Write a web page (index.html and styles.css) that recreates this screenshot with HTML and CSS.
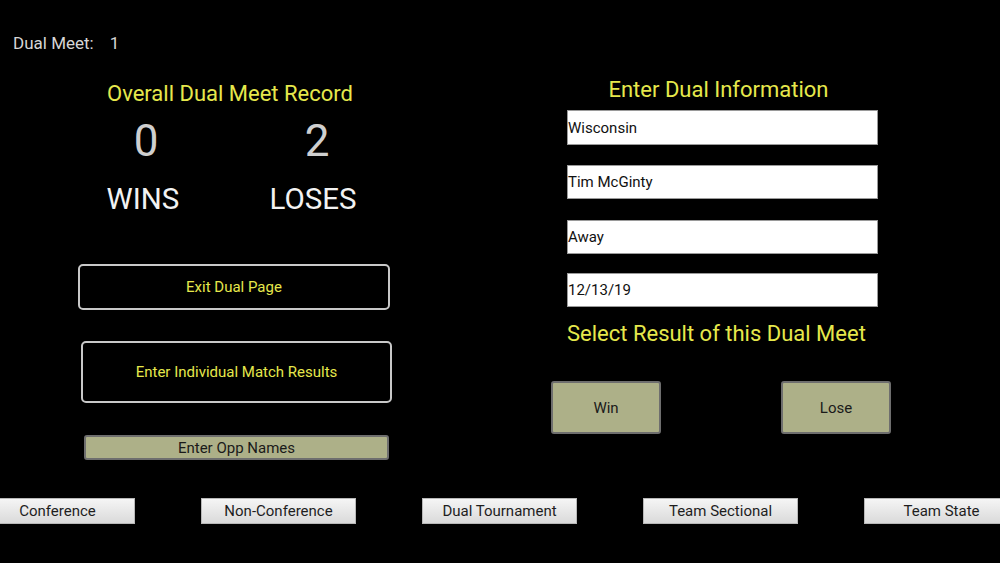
FILE: index.html
```html
<!DOCTYPE html>
<html>
<head>
<meta charset="utf-8">
<link rel="stylesheet" href="styles.css">
</head>
<body>
<div class="screen">
  <div class="top"><span>Dual Meet:</span><span class="meet-no">1</span></div>
  <div class="main">
    <div class="left">
      <div class="title">Overall Dual Meet Record</div>
      <div class="scores">
        <div class="stat"><div class="num">0</div><div class="label">WINS</div></div>
        <div class="stat"><div class="num">2</div><div class="label">LOSES</div></div>
      </div>
      <div class="btn-outline exit">Exit Dual Page</div>
      <div class="btn-outline matches">Enter Individual Match Results</div>
      <div class="btn-olive opp">Enter Opp Names</div>
    </div>
    <div class="right">
      <div class="heading">Enter Dual Information</div>
      <div class="field f1">Wisconsin</div>
      <div class="field f2">Tim McGinty</div>
      <div class="field f3">Away</div>
      <div class="field f4">12/13/19</div>
      <div class="select">Select Result of this Dual Meet</div>
      <div class="result-row">
        <div class="btn-olive result">Win</div>
        <div class="btn-olive result">Lose</div>
      </div>
    </div>
  </div>
  <div class="tabs">
    <div class="tab">Conference</div>
    <div class="tab">Non-Conference</div>
    <div class="tab">Dual Tournament</div>
    <div class="tab">Team Sectional</div>
    <div class="tab">Team State</div>
  </div>
</div>
</body>
</html>
```

FILE: styles.css
```css
html, body {
  margin: 0;
  padding: 0;
  background: #000;
}
.screen {
  width: 1000px;
  height: 563px;
  overflow: hidden;
  background: #000;
  font-family: Roboto, "Liberation Sans", sans-serif;
}
.top {
  padding: 33px 0 0 13px;
  height: 20px;
  font-size: 17px;
  line-height: 20px;
  color: #d6d6d6;
}
.meet-no {
  margin-left: 16px;
}
.main {
  display: grid;
  grid-template-columns: 470px 1fr;
  height: 445px;
}
.title, .heading, .select {
  font-size: 22px;
  line-height: 26px;
  color: #e6e84c;
}
.title {
  margin-top: 28px;
  width: 460px;
  text-align: center;
}
.scores {
  display: flex;
  gap: 48px;
  margin-top: 12px;
  margin-left: 85px;
}
.stat {
  width: 120px;
  text-align: center;
}
.num {
  font-size: 44px;
  line-height: 44px;
  color: #cfcfcf;
}
.stat:first-child .num {
  padding-left: 2px;
}
.stat:last-child .num {
  padding-left: 8px;
}
.label {
  margin-top: 22px;
  font-size: 29.5px;
  line-height: 28px;
  color: #f2f2f2;
}
.stat:first-child .label {
  margin-right: 4px;
}
.btn-outline {
  box-sizing: border-box;
  border: 2px solid #c8c8c8;
  border-radius: 5px;
  display: flex;
  align-items: center;
  justify-content: center;
  color: #e6e84c;
  font-size: 15px;
}
.exit {
  margin-top: 51px;
  margin-left: 78px;
  width: 312px;
  height: 46px;
}
.matches {
  margin-top: 31px;
  margin-left: 81px;
  width: 311px;
  height: 62px;
}
.btn-olive {
  box-sizing: border-box;
  background: #adb088;
  border: 2px solid #6e6e6e;
  border-radius: 3px;
  display: flex;
  align-items: center;
  justify-content: center;
  color: #1a1a1a;
  font-size: 15px;
}
.opp {
  margin-top: 32px;
  margin-left: 84px;
  width: 305px;
  height: 25px;
}
.right {
  padding-left: 97px;
}
.heading {
  margin-top: 24px;
  width: 303px;
  text-align: center;
}
.field {
  box-sizing: border-box;
  width: 311px;
  height: 34px;
  background: #fff;
  border: 1px solid #9a9a9a;
  padding-left: 0;
  display: flex;
  align-items: center;
  font-size: 15px;
  color: #111;
}
.f1 { margin-top: 7px; height: 35px; }
.f2 { margin-top: 20px; }
.f3 { margin-top: 21px; }
.f4 { margin-top: 19px; }
.select {
  margin-top: 14px;
  padding-left: 0;
}
.result-row {
  display: flex;
  gap: 120px;
  margin-top: 34px;
  margin-left: -16px;
}
.result {
  width: 110px;
  height: 53px;
}
.tabs {
  display: flex;
  gap: 66px;
  margin-left: -20px;
}
.tab {
  flex: none;
  box-sizing: border-box;
  width: 155px;
  height: 26px;
  background: linear-gradient(#f5f5f5, #dadada);
  border: 1px solid #b8b8b8;
  display: flex;
  align-items: center;
  justify-content: center;
  font-size: 15px;
  color: #1e1e1e;
}
```
